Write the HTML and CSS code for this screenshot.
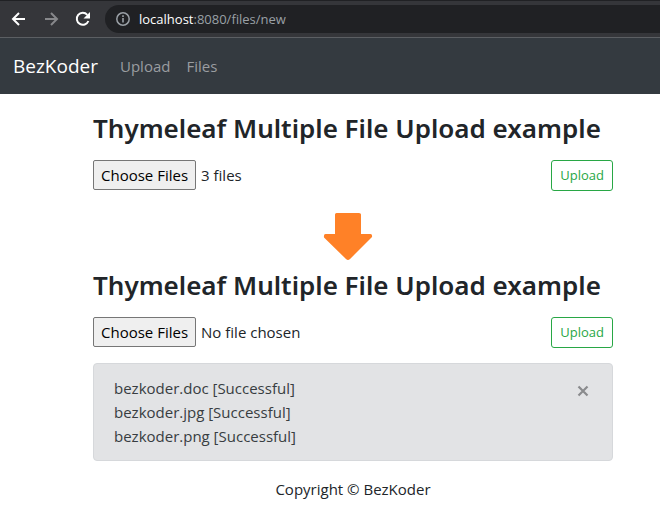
FILE: index.html
```html
<!DOCTYPE html>
<html lang="en">
<head>
<meta charset="utf-8">
<title>Thymeleaf Multiple File Upload example</title>
<link rel="stylesheet" href="styles.css">
</head>
<body>
<div class="toolbar">
  <button class="tool" type="button" aria-label="Back">
    <svg width="16" height="16" viewBox="0 0 16 16"><path d="M14 8H2.500M8 2L2 8l6 6" fill="none" stroke="currentColor" stroke-width="2"/></svg>
  </button>
  <button class="tool tool-off" type="button" aria-label="Forward">
    <svg width="16" height="16" viewBox="0 0 16 16"><path d="M2 8h11.500M8 2l6 6-6 6" fill="none" stroke="currentColor" stroke-width="2"/></svg>
  </button>
  <button class="tool" type="button" aria-label="Reload">
    <svg width="16" height="16" viewBox="0 0 16 16"><path d="M13.400 10A6 6 0 1 1 12.300 3.800" fill="none" stroke="currentColor" stroke-width="2"/><path d="M15 1v6.500H8.500z" fill="currentColor"/></svg>
  </button>
  <div class="address">
    <svg width="16" height="16" viewBox="0 0 16 16"><circle cx="8" cy="8" r="6.200" fill="none" stroke="currentColor" stroke-width="1.500"/><path d="M8 7v4.500M8 4.300v1.600" stroke="currentColor" stroke-width="1.600"/></svg>
    <span><span class="host">localhost</span>:8080/files/new</span>
  </div>
</div>
<nav class="navbar">
  <a class="brand" href="#">BezKoder</a>
  <a class="nav-link" href="#">Upload</a>
  <a class="nav-link" href="#">Files</a>
</nav>
<main class="container">
  <section>
    <h3>Thymeleaf Multiple File Upload example</h3>
    <form class="upload">
      <input type="file" id="selected-files" aria-label="Files to upload" multiple>
      <button class="btn" type="button">Upload</button>
    </form>
  </section>
  <svg class="arrow" width="50" height="48" viewBox="0 0 50 48"><path d="M12 1.500Q12 0 13.500 0h22.500Q38 0 38 1.500V21h9.500q2 0 1.500 3L27 46q-2 2-4 0L1 24.500Q.5 21 2.500 21H12z" fill="#ff8127"/></svg>
  <section>
    <h3>Thymeleaf Multiple File Upload example</h3>
    <form class="upload">
      <input type="file" aria-label="More files to upload" multiple>
      <button class="btn" type="button">Upload</button>
    </form>
    <div class="alert" role="alert">
      <ul>
        <li>bezkoder.doc [Successful]</li>
        <li>bezkoder.jpg [Successful]</li>
        <li>bezkoder.png [Successful]</li>
      </ul>
      <button class="close" type="button" aria-label="Close">
        <svg width="12" height="12" viewBox="0 0 12 12"><path d="M1.500 1.500l9 9M10.500 1.500l-9 9" stroke="currentColor" stroke-width="2.200"/></svg>
      </button>
    </div>
  </section>
  <footer>Copyright © BezKoder</footer>
</main>
<script src="script.js"></script>
</body>
</html>
```
FILE: styles.css
```css
* { box-sizing: border-box; }
body {
  margin: 0;
  background: #fff;
  color: #212529;
  font: 15px/24px "Open Sans", "Noto Sans", sans-serif;
}
button { font-family: inherit; cursor: pointer; }
a { text-decoration: none; }

.toolbar {
  display: flex;
  align-items: center;
  gap: 16px;
  height: 38px;
  padding: 0 0 0 11px;
  background: #35363a;
  border-top: 1px solid #202124;
  border-bottom: 1px solid #5c5f63;
}
.tool {
  display: flex;
  padding: 0;
  border: 0;
  background: none;
  color: #fff;
}
.tool-off { color: #87888b; }
.address {
  display: flex;
  flex: 1;
  align-items: center;
  gap: 8px;
  height: 28px;
  margin-left: -2px;
  padding-left: 10px;
  border-radius: 14px 0 0 14px;
  background: #202124;
  color: #9aa0a6;
  font-size: 13px;
}
.host { color: #fff; }

.navbar {
  display: flex;
  align-items: center;
  gap: 16px;
  height: 56px;
  padding: 0 13px;
  background: #343a40;
}
.brand {
  margin-right: 6px;
  color: #fff;
  font-size: 19px;
}
.nav-link { color: #9a9da0; }

.container { padding: 17px 47px 0 93px; }
h3 {
  margin: 0 0 15px;
  font-family: "Noto Sans", "Open Sans", sans-serif;
  font-size: 26px;
  line-height: 34px;
  font-weight: 600;
  white-space: nowrap;
}
.upload {
  display: flex;
  justify-content: space-between;
  align-items: flex-start;
}
input[type="file"] {
  flex: 1;
  min-width: 0;
  color: #212529;
  font: inherit;
}
input[type="file"]::file-selector-button {
  height: 30px;
  margin-right: 5px;
  padding: 0 7px;
  border: 1px solid #767676;
  border-radius: 2px;
  background: #efefef;
  color: #000;
  font: inherit;
}
.btn {
  height: 31px;
  padding: 0 8px;
  border: 1px solid #28a745;
  border-radius: 3px;
  background: #fff;
  color: #28a745;
  font-size: 13px;
  line-height: 21px;
}
.arrow {
  display: block;
  margin: 22px auto 7px 230px;
}
.alert {
  display: flex;
  justify-content: space-between;
  align-items: flex-start;
  margin-top: 15px;
  padding: 12px 20px;
  border: 1px solid #d6d8db;
  border-radius: 4px;
  background: #e2e3e5;
  color: #383d41;
}
.alert ul {
  margin: 0;
  padding: 0;
  list-style: none;
}
.close {
  display: flex;
  margin: 9px 3px 0 0;
  padding: 0;
  border: 0;
  background: none;
  color: #8a8b8d;
}
footer {
  margin-top: 16px;
  text-align: center;
}
```
FILE: script.js
```js
// Preselect three files in the first form.
const selection = new DataTransfer();
for (const name of ["bezkoder.doc", "bezkoder.jpg", "bezkoder.png"]) {
  selection.items.add(new File([""], name));
}
document.getElementById("selected-files").files = selection.files;
```
